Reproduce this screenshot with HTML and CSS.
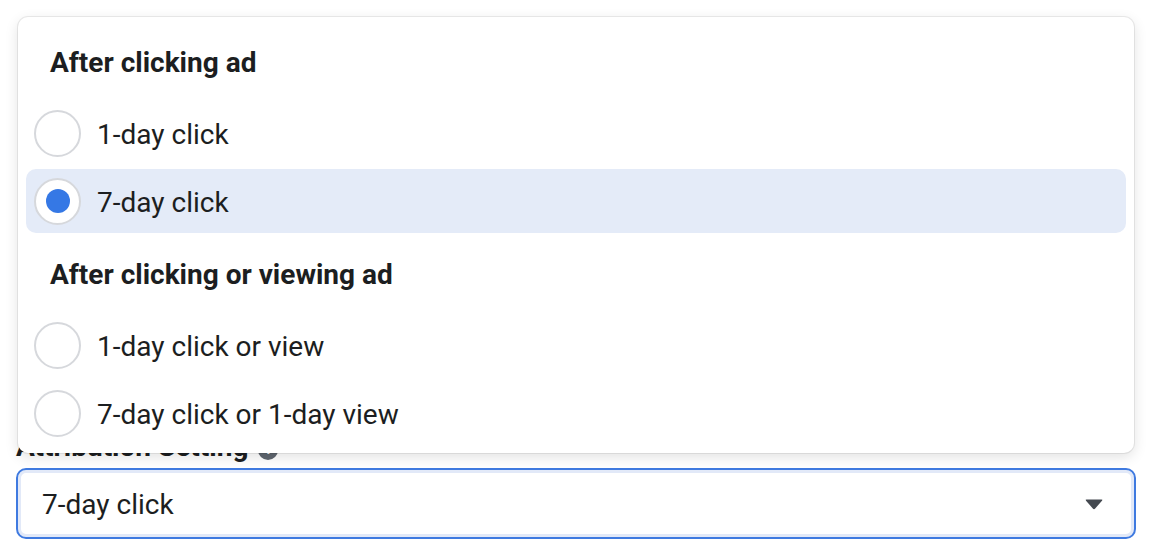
FILE: index.html
```html
<!DOCTYPE html>
<html lang="en">
<head>
<meta charset="utf-8">
<title>Attribution Setting</title>
<link rel="stylesheet" href="styles.css">
</head>
<body>
<div class="page">
  <div class="field">
    <div class="field-label">
      <span>Attribution Setting</span>
      <span class="info-icon">i</span>
    </div>
    <div class="select">
      <span class="select-value">7-day click</span>
      <svg class="caret" width="18" height="11" viewBox="0 0 18 11"><path d="M1.5 0.5 H16.5 Q18 0.5 17 1.7 L10.2 9.6 Q9 10.8 7.8 9.6 L1 1.7 Q0 0.5 1.5 0.5 Z" fill="#444950"/></svg>
    </div>
  </div>

  <div class="menu">
    <div class="menu-heading">After clicking ad</div>
    <div class="option"><span class="radio"></span><span class="option-text">1-day click</span></div>
    <div class="option selected"><span class="radio checked"></span><span class="option-text">7-day click</span></div>
    <div class="menu-heading">After clicking or viewing ad</div>
    <div class="option"><span class="radio"></span><span class="option-text">1-day click or view</span></div>
    <div class="option"><span class="radio"></span><span class="option-text">7-day click or 1-day view</span></div>
  </div>
</div>
</body>
</html>
```

FILE: styles.css
```css
* { box-sizing: border-box; }
html, body { margin: 0; padding: 0; background: #ffffff; }
body {
  font-family: Roboto, "Liberation Sans", Arial, sans-serif;
  color: #1c1e21;
  width: 1156px;
  height: 552px;
  overflow: hidden;
}
.page {
  position: relative;
  height: 552px;
}
.field {
  padding: 430px 20px 0 16px;
}
.field-label {
  display: flex;
  align-items: center;
  gap: 10px;
  font-weight: 700;
  font-size: 28px;
  line-height: 33px;
  color: #1c1e21;
  margin-bottom: 5px;
}
.info-icon {
  display: inline-flex;
  align-items: center;
  justify-content: center;
  width: 20px;
  height: 20px;
  border-radius: 50%;
  background: #606770;
  color: #fff;
  font-size: 14px;
  margin-top: 6px;
}
.select {
  display: flex;
  align-items: center;
  justify-content: space-between;
  height: 71px;
  border: 2px solid #3f7ae0;
  border-radius: 10px;
  box-shadow: inset 0 0 0 3px #e2e9f8;
  padding: 0 31px 0 24px;
  font-size: 28px;
}
.select-value { padding-top: 1px; }
.caret { display: block; margin-top: 2px; }
.menu {
  position: absolute;
  left: 18px;
  top: 17px;
  width: 1116px;
  background: #fff;
  border-radius: 10px;
  padding: 8px;
  display: flex;
  flex-direction: column;
  gap: 4px;
  box-shadow: 0 0 0 1px rgba(0,0,0,0.07), 0 4px 14px rgba(0,0,0,0.12);
}
.menu-heading {
  height: 72px;
  display: flex;
  align-items: center;
  padding-left: 24px;
  padding-top: 2px;
  font-weight: 700;
  font-size: 28px;
  color: #1c1e21;
}
.option {
  height: 64px;
  display: flex;
  align-items: center;
  padding-left: 8px;
  border-radius: 10px;
  font-size: 28px;
}
.option-text { padding-top: 3px; }
.option.selected { background: #e4ebf8; }
.radio {
  width: 47px;
  height: 47px;
  border-radius: 50%;
  border: 2px solid #d6d8dc;
  background: #fff;
  display: flex;
  align-items: center;
  justify-content: center;
  margin-right: 16px;
  flex: none;
}
.radio.checked::after {
  content: "";
  width: 24px;
  height: 24px;
  border-radius: 50%;
  background: #3578e5;
}
```
